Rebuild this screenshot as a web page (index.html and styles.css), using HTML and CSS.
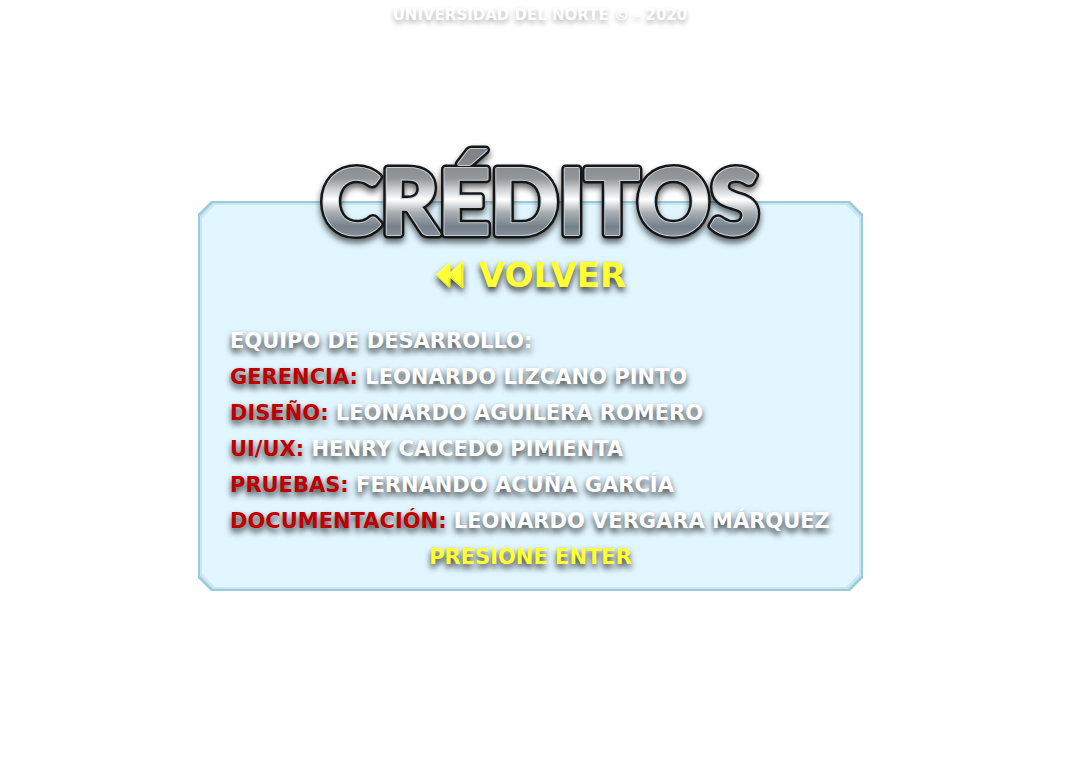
FILE: index.html
```html
<!DOCTYPE html>
<html lang="es">
<head>
<meta charset="utf-8">
<meta name="viewport" content="width=device-width, initial-scale=1">
<title>Créditos</title>
<link rel="stylesheet" href="styles.css">
</head>
<body>
<header class="site-header">Universidad del Norte © - 2020</header>
<main class="credits">
  <h1 class="title">
    <svg class="title-art" viewBox="0 0 460 112" role="img" aria-label="Créditos">
      <defs>
        <linearGradient id="metal" gradientUnits="userSpaceOnUse" x1="0" y1="18" x2="0" y2="98">
          <stop offset="0" stop-color="#808486"/>
          <stop offset="0.26" stop-color="#94989b"/>
          <stop offset="0.4" stop-color="#d2d4d5"/>
          <stop offset="0.52" stop-color="#ffffff"/>
          <stop offset="0.68" stop-color="#a9afb3"/>
          <stop offset="0.86" stop-color="#75808a"/>
          <stop offset="1" stop-color="#8b969f"/>
        </linearGradient>
        <text id="word" x="230" y="94" text-anchor="middle">CRÉDITOS</text>
      </defs>
      <use href="#word" class="title-edge"/>
      <use href="#word" class="title-rim"/>
      <use href="#word" class="title-face"/>
    </svg>
  </h1>
  <section class="panel">
    <div class="panel-rim">
      <div class="panel-body">
        <button class="back" type="button">
          <svg class="back-icon" viewBox="0 0 30 28" aria-hidden="true">
            <path d="M1 14 13 2.500Q15 1 15.500 3V11L25 1.500Q28 0 28.500 2V26Q28 28 25.500 26L15.500 17V25Q15 27.500 13 26Z" fill="#ff3"/>
            <path d="M1 14 14 2M16 13 28 2" fill="none" stroke="#ffff8c"/>
            <path d="M2 15 14 26V17M16 16 27 26V3" fill="none" stroke="#dddc20"/>
          </svg>
          Volver
        </button>
        <div class="team">
          <h2 class="line">Equipo de desarrollo:</h2>
          <p class="line"><span class="role">Gerencia:</span> Leonardo Lizcano Pinto</p>
          <p class="line"><span class="role">Diseño:</span> Leonardo Aguilera Romero</p>
          <p class="line"><span class="role">UI/UX:</span> Henry Caicedo Pimienta</p>
          <p class="line"><span class="role">Pruebas:</span> Fernando Acuña García</p>
          <p class="line"><span class="role">Documentación:</span> Leonardo Vergara Márquez</p>
          <p class="line prompt">Presione Enter</p>
        </div>
      </div>
    </div>
  </section>
</main>
</body>
</html>
```
FILE: styles.css
```css
* { box-sizing: border-box; }
body {
  margin: 0;
  min-height: 100vh;
  background: #fff;
  color: #fff;
  font-family: "DejaVu Sans", Verdana, sans-serif;
  font-weight: 700;
  text-transform: uppercase;
  text-shadow: 0 4px 6px rgba(0, 0, 0, .8);
}
.site-header {
  padding-top: 5px;
  font-size: 15px;
  line-height: 20px;
  text-align: center;
  text-shadow: 0 3px 5px rgba(0, 0, 0, .3);
}
.credits {
  display: flex;
  flex-direction: column;
  align-items: center;
  padding-top: 115px;
}
.title {
  position: relative;
  z-index: 1;
  width: 100%;
  max-width: 460px;
  margin: 0 0 -51px;
}
.title-art {
  display: block;
  width: 100%;
  overflow: visible;
  font-family: Lato, sans-serif;
  font-size: 90px;
  font-weight: 700;
  text-shadow: none;
  filter: drop-shadow(0 4px 3px rgba(0, 0, 0, .6));
}
.title-edge { fill: #161616; stroke: #161616; stroke-width: 9px; stroke-linejoin: round; }
.title-rim { fill: #c4d0d8; stroke: #c4d0d8; stroke-width: 4px; stroke-linejoin: round; }
.title-face { fill: url(#metal); stroke: url(#metal); stroke-width: 2px; }
.panel,
.panel-rim,
.panel-body {
  clip-path: polygon(13px 0, calc(100% - 13px) 0, 100% 13px, 100% calc(100% - 13px), calc(100% - 13px) 100%, 13px 100%, 0 calc(100% - 13px), 0 13px);
}
.panel {
  width: 100%;
  max-width: 665px;
  margin-right: 19px;
  padding: 2px;
  background: #9ccbdc;
}
.panel-rim { padding: 2px; background: #c8e7f3; }
.panel-body {
  padding: 46px 28px 12px;
  background: #e2f6ff;
}
.back {
  display: flex;
  align-items: center;
  gap: 14px;
  margin: 0 auto;
  padding: 0;
  border: 0;
  background: none;
  color: #ff3;
  font: inherit;
  font-size: 34px;
  line-height: 48px;
  text-transform: inherit;
  text-shadow: inherit;
  cursor: pointer;
}
.back-icon {
  width: 30px;
  height: 28px;
  filter: drop-shadow(0 4px 3px rgba(0, 0, 0, .7));
}
.team { padding-top: 24px; }
.line {
  margin: 0;
  font-size: 21px;
  font-weight: 700;
  line-height: 36px;
}
.role { color: #c00000; }
.prompt { color: #ff3; text-align: center; }
```
